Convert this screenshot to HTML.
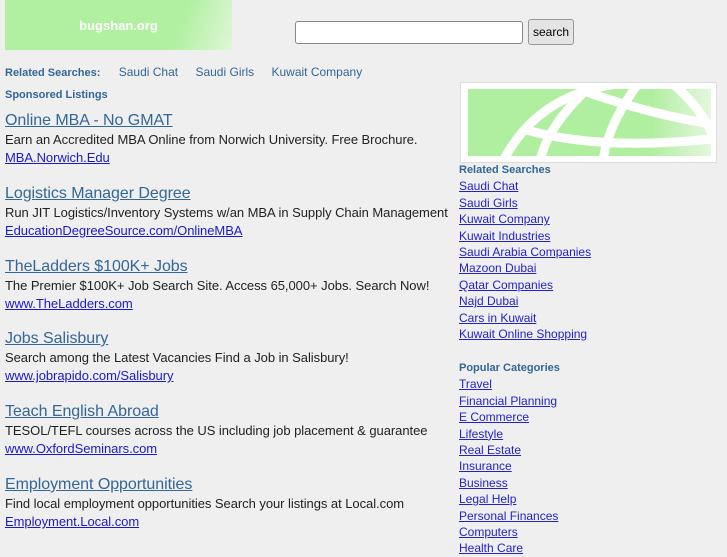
<!DOCTYPE html><html><head><style>
body{margin:0;background:#efefef;font-family:"Liberation Sans",sans-serif;width:727px;height:545px;overflow:hidden;position:relative}
.a{position:absolute}
.logo{left:5px;top:0;width:227px;height:50px;background:linear-gradient(110deg,#b0f0a0 75%,#e0f6d8);color:#fff;font-weight:bold;font-size:13px;text-align:center;line-height:52px}
.rs{left:5px;top:65px;font-size:12px;color:#336699}
.rs b{font-size:11px;margin-right:15px}.rs span{margin-right:14px}
.sp{left:5px;top:89px;font-size:11px;font-weight:bold;color:#336699}
.ad{left:5px;font-size:13px;color:#222;line-height:18px;letter-spacing:-0.05px}
.ad .t{font-size:16px;color:#336699;text-decoration:underline;line-height:20px}
.ad .u{color:#1a1acc;text-decoration:underline}
.r{left:459px;font-size:12px;line-height:16.4px;color:#2222cc}
.r div{text-decoration:underline}
.r .h{font-size:11px;font-weight:bold;color:#336699;text-decoration:none}
</style></head><body>
<div class="a logo">bugshan.org</div>
<div class="a" style="left:295px;top:21px;width:226px;height:21px;background:#fff;border:1px solid #888;border-radius:3px"></div>
<div class="a" style="left:528px;top:19px;width:44px;height:24px;border:1px solid #999;border-radius:3px;background:#e4e4e4;font-size:12px;text-align:center;line-height:24px">search</div>
<div class="a rs"><b>Related Searches:</b> <span>Saudi Chat</span> <span>Saudi Girls</span> <span>Kuwait Company</span></div>
<div class="a sp">Sponsored Listings</div>
<div class="a ad" style="top:111px"><div class="t">Online MBA - No GMAT</div>Earn an Accredited MBA Online from Norwich University. Free Brochure.<br><span class="u">MBA.Norwich.Edu</span></div>
<div class="a ad" style="top:184px"><div class="t">Logistics Manager Degree</div>Run JIT Logistics/Inventory Systems w/an MBA in Supply Chain Management<br><span class="u">EducationDegreeSource.com/OnlineMBA</span></div>
<div class="a ad" style="top:257px"><div class="t">TheLadders $100K+ Jobs</div>The Premier $100K+ Job Search Site. Access 65,000+ Jobs. Search Now!<br><span class="u">www.TheLadders.com</span></div>
<div class="a ad" style="top:329px"><div class="t">Jobs Salisbury</div>Search among the Latest Vacancies Find a Job in Salisbury!<br><span class="u">www.jobrapido.com/Salisbury</span></div>
<div class="a ad" style="top:402px"><div class="t">Teach English Abroad</div>TESOL/TEFL courses across the US including job placement &amp; guarantee<br><span class="u">www.OxfordSeminars.com</span></div>
<div class="a ad" style="top:475px"><div class="t">Employment Opportunities</div>Find local employment opportunities Search your listings at Local.com<br><span class="u">Employment.Local.com</span></div>
<div class="a" style="left:460px;top:82px;width:255px;height:79px;background:#fff;border:1px solid #ddd">
<svg width="243" height="67" style="position:absolute;left:7px;top:6px"><defs><linearGradient id="g" x1="0" x2="1"><stop offset=".75" stop-color="#b0eea0"/><stop offset="1" stop-color="#e4f8dc"/></linearGradient></defs><rect width="243" height="67" fill="url(#g)"/><g stroke="#fff" stroke-width="9" fill="none"><path d="M35 72 Q70 5 150 -5"/><path d="M125 -5 Q80 35 72 72"/><path d="M205 -5 Q240 25 250 60"/><path d="M55 40 Q130 62 243 50"/><path d="M110 0 Q180 25 243 35"/><path d="M170 -5 Q140 35 135 72"/></g></svg></div>
<div class="a r" style="top:162px"><div class="h">Related Searches</div><div>Saudi Chat</div><div>Saudi Girls</div><div>Kuwait Company</div><div>Kuwait Industries</div><div>Saudi Arabia Companies</div><div>Mazoon Dubai</div><div>Qatar Companies</div><div>Najd Dubai</div><div>Cars in Kuwait</div><div>Kuwait Online Shopping</div></div>
<div class="a r" style="top:360px"><div class="h">Popular Categories</div><div>Travel</div><div>Financial Planning</div><div>E Commerce</div><div>Lifestyle</div><div>Real Estate</div><div>Insurance</div><div>Business</div><div>Legal Help</div><div>Personal Finances</div><div>Computers</div><div>Health Care</div></div>
</body></html>
